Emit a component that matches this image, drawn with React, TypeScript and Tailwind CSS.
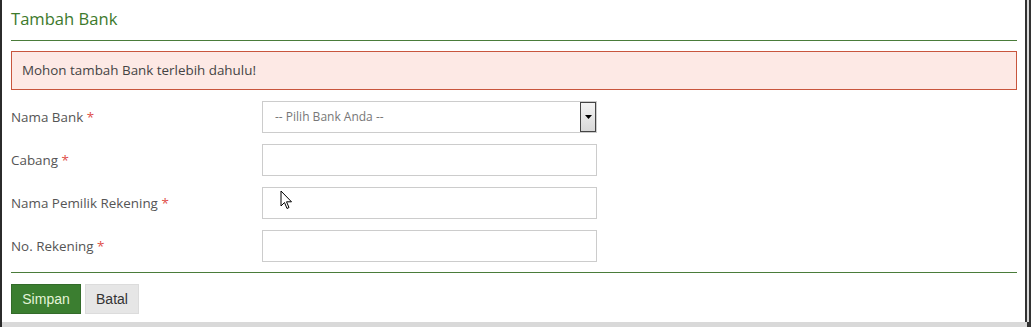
import React from "react";

const Label = ({ text }: { text: string }) => (
  <div className="w-[251px] text-[13.4px] text-[#555]">
    {text} <span className="text-[#e0504a]">*</span>
  </div>
);

export default function App() {
  return (
    <div className="w-[1031px] h-[327px] bg-[#333] flex" style={{ fontFamily: '"Open Sans", "Noto Sans", sans-serif' }}>
      <div className="w-[2px] bg-[#2b2b2b]" />
      <div className="flex flex-col w-[1025px]">
        <div className="bg-white h-[322px] w-[1023px] relative">
          <div className="pl-[9px] pr-[8px]">
            <div className="h-[40px] flex items-center text-[16.6px] text-[#3d7a2c] pb-[2px]">Tambah Bank</div>
            <div className="h-[1px] bg-[#4a7c3a]" />
            <div className="mt-[10px] h-[39px] border border-[#c8553d] bg-[#fde9e5] flex items-center pl-[10px] text-[13.4px] text-[#444]">
              Mohon tambah Bank terlebih dahulu!
            </div>
            <div className="mt-[11px] flex flex-col gap-[11px]">
              <div className="flex items-center h-[32px]">
                <Label text="Nama Bank" />
                <div className="w-[335px] h-[32px] border border-[#ccc] flex items-center">
                  <div className="flex-1 pl-[12px] text-[12px] text-[#777]">-- Pilih Bank Anda --</div>
                  <div className="w-[16px] h-[30px] border border-[#444] bg-gradient-to-b from-[#f4f4f4] to-[#d8d8d8] flex items-center justify-center">
                    <svg width="7" height="4" viewBox="0 0 7 4"><path d="M0 0H7L3.5 4Z" fill="#000" /></svg>
                  </div>
                </div>
              </div>
              <div className="flex items-center h-[32px]">
                <Label text="Cabang" />
                <div className="w-[335px] h-[32px] border border-[#ccc]" />
              </div>
              <div className="flex items-center h-[32px]">
                <Label text="Nama Pemilik Rekening" />
                <div className="w-[335px] h-[32px] border border-[#ccc]" />
              </div>
              <div className="flex items-center h-[32px]">
                <Label text="No. Rekening" />
                <div className="w-[335px] h-[32px] border border-[#ccc]" />
              </div>
            </div>
            <div className="mt-[10px] h-[1px] bg-[#4a7c3a]" />
            <div className="mt-[11px] flex gap-[4px]" style={{ fontFamily: '"Liberation Sans", Arial, sans-serif' }}>
              <div className="w-[70px] h-[30px] bg-[#3b7e30] border border-[#336b2a] text-[#e4f4d8] text-[14px] flex items-center justify-center">Simpan</div>
              <div className="w-[54px] h-[30px] bg-[#e6e6e6] border border-[#dcdcdc] text-[#333] text-[14px] flex items-center justify-center">Batal</div>
            </div>
          </div>
          <svg className="absolute left-[278px] top-[190px]" width="13" height="20" viewBox="0 0 13 20">
            <path d="M1 1V16L4.5 12.5L7 18.5L9 17.5L6.5 11.8H11.5Z" fill="#fff" stroke="#000" strokeWidth="1" strokeLinejoin="round" />
          </svg>
        </div>
        <div className="h-[5px] bg-[#d9d9d9] w-[1025px]" />
      </div>
      <div className="w-[2px] bg-[#d9d9d9] h-[322px]" />
      <div className="flex-1 bg-[#333]" />
    </div>
  );
}
